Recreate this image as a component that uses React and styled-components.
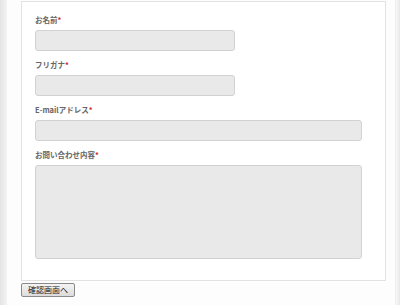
import React from 'react';
import styled, { createGlobalStyle } from 'styled-components';

const GlobalStyle = createGlobalStyle`
    html, body {
        margin: 0;
        padding: 0;
        background: #ffffff;
    }
    body {
        font-family: "Noto Sans CJK JP", "Noto Sans", sans-serif;
    }
`;

const Shell = styled.div`
    display: flex;
    width: 400px;
    height: 305px;
    overflow: hidden;
    background: #fdfdfd;
`;

const LeftEdge = styled.div`
    flex-shrink: 0;
    width: 7px;
    background: linear-gradient(to right, #e4e4e4, #f4f4f4);
`;

const RightEdge = styled.div`
    flex-shrink: 0;
    width: 4px;
    margin-left: auto;
    border-left: 1px solid #f0f0f0;
    background: linear-gradient(to right, #f8f8f8, #e8e8e8);
`;

const Main = styled.div`
    display: flex;
    flex-direction: column;
    align-items: flex-start;
    padding: 1px 0 0 14px;
`;

const FormBox = styled.div`
    width: 327px;
    padding: 13px 23px 12px 13px;
    border: 1px solid #e2e2e2;
    background: #ffffff;
`;

const Field = styled.div`
    display: flex;
    flex-direction: column;
    margin-bottom: 9px;
`;

const Label = styled.div`
    font-size: 7.5px;
    line-height: 10px;
    font-weight: 700;
    color: #666666;
    margin-bottom: 5px;
`;

const Required = styled.span`
    color: #d02a2a;
`;

const TextInput = styled.input`
    box-sizing: border-box;
    width: ${(p) => (p.$short ? '200px' : '327px')};
    height: 21px;
    padding: 0 6px;
    border: 1px solid #d2d2d2;
    border-radius: 3px;
    background: #e9e9e9;
    outline: none;
`;

const TextArea = styled.textarea`
    display: block;
    box-sizing: border-box;
    width: 327px;
    height: 94px;
    padding: 4px 6px;
    border: 1px solid #d2d2d2;
    border-radius: 3px;
    background: #e9e9e9;
    resize: none;
    outline: none;
`;

const SubmitButton = styled.button`
    margin-top: 2px;
    width: 54px;
    height: 14px;
    padding: 0;
    border: 1px solid #8a8a8a;
    border-radius: 2px;
    background: linear-gradient(to bottom, #f4f4f4, #dcdcdc);
    font-family: "Noto Sans CJK JP", sans-serif;
    font-size: 8px;
    line-height: 12px;
    color: #222222;
`;

const fields = [
    { label: 'お名前', short: true },
    { label: 'フリガナ', short: true },
    { label: 'E-mailアドレス', short: false },
];

const App = () => {
    return (
        <>
            <GlobalStyle />
            <Shell>
                <LeftEdge />
                <Main>
                    <FormBox>
                        {fields.map((f) => (
                            <Field key={f.label}>
                                <Label>
                                    {f.label}
                                    <Required>*</Required>
                                </Label>
                                <TextInput type="text" $short={f.short} />
                            </Field>
                        ))}
                        <Field>
                            <Label>
                                お問い合わせ内容
                                <Required>*</Required>
                            </Label>
                            <TextArea />
                        </Field>
                    </FormBox>
                    <SubmitButton type="button">確認画面へ</SubmitButton>
                </Main>
                <RightEdge />
            </Shell>
        </>
    );
};

export default App;
